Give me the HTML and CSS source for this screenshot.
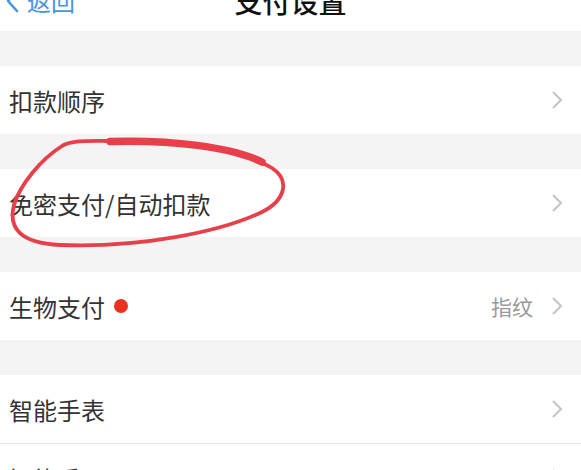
FILE: index.html
```html
<!DOCTYPE html>
<html lang="zh-CN">
<head>
    <meta charset="UTF-8">
    <meta name="viewport" content="width=device-width, initial-scale=1.0">
    <title>支付设置</title>
    <link rel="stylesheet" href="styles.css">
</head>
<body>
    <div class="page">
        <div class="nav">
            <div class="nav-inner">
                <a class="back" href="#">
                    <svg class="back-icon" width="14" height="24" viewBox="0 0 14 24">
                        <path d="M12 2 L3 12 L12 22" fill="none" stroke="#4a94dc" stroke-width="2.6" stroke-linecap="round" stroke-linejoin="round"/>
                    </svg>
                    <span>返回</span>
                </a>
                <h1 class="title">支付设置</h1>
                <div></div>
            </div>
        </div>

        <div class="gap"></div>
        <div class="cell">
            <span class="label">扣款顺序</span>
            <svg class="arrow" width="12" height="20" viewBox="0 0 12 20"><path d="M2 2 L10 10 L2 18" fill="none" stroke="#c4c4c8" stroke-width="2"/></svg>
        </div>

        <div class="gap"></div>
        <div class="cell">
            <span class="label">免密支付/自动扣款</span>
            <svg class="arrow" width="12" height="20" viewBox="0 0 12 20"><path d="M2 2 L10 10 L2 18" fill="none" stroke="#c4c4c8" stroke-width="2"/></svg>
        </div>

        <div class="gap"></div>
        <div class="cell">
            <span class="label">生物支付</span>
            <span class="dot"></span>
            <span class="value">指纹</span>
            <svg class="arrow" width="12" height="20" viewBox="0 0 12 20"><path d="M2 2 L10 10 L2 18" fill="none" stroke="#c4c4c8" stroke-width="2"/></svg>
        </div>

        <div class="gap"></div>
        <div class="cell cell-line">
            <span class="label">智能手表</span>
            <svg class="arrow" width="12" height="20" viewBox="0 0 12 20"><path d="M2 2 L10 10 L2 18" fill="none" stroke="#c4c4c8" stroke-width="2"/></svg>
        </div>
        <div class="cell">
            <span class="label">智能手环</span>
            <svg class="arrow" width="12" height="20" viewBox="0 0 12 20"><path d="M2 2 L10 10 L2 18" fill="none" stroke="#c4c4c8" stroke-width="2"/></svg>
        </div>

        <!-- hand drawn circle over the second row -->
        <svg class="mark" width="581" height="470" viewBox="0 0 581 470">
            <path d="M108 141 C170 138 240 148 272 168 C290 180 286 200 262 212 C220 232 140 248 60 245 C20 243 8 228 14 205 C20 185 40 160 62 146 C72 140 90 141 108 141 Z" fill="none" stroke="#e8404a" stroke-width="3.8" stroke-linejoin="round"/>
            <path d="M110 141.5 C170 139.5 232 147 262 162" fill="none" stroke="#e8404a" stroke-width="7.5" stroke-linecap="round"/>
        </svg>
    </div>
</body>
</html>
```

FILE: styles.css
```css
* {
    box-sizing: border-box;
    margin: 0;
    padding: 0;
}

body {
    font-family: "Noto Sans CJK SC", "Noto Sans", sans-serif;
    background-color: #f4f4f4;
    color: #333;
    overflow: hidden;
}

.page {
    position: relative;
    width: 581px;
    height: 470px;
    overflow: hidden;
}

.nav {
    height: 31px;
    background: white;
    overflow: hidden;
}

.nav-inner {
    display: grid;
    grid-template-columns: 1fr auto 1fr;
    align-items: center;
    height: 32px;
    margin-top: -17px;
}

.back {
    display: flex;
    align-items: center;
    gap: 8px;
    padding-left: 5px;
    color: #4a94dc;
    font-size: 24px;
    text-decoration: none;
}

.title {
    font-size: 28px;
    font-weight: 500;
    color: #111;
    line-height: 32px;
}

.gap {
    height: 35px;
}

.cell {
    display: flex;
    align-items: center;
    height: 68px;
    padding: 0 18px 0 9px;
    background: white;
}

.cell-line {
    height: 69px;
    border-bottom: 1px solid #e6e6e6;
    background-clip: padding-box;
}

.label {
    font-size: 24px;
    color: #333;
}

.dot {
    width: 14px;
    height: 14px;
    margin-left: 9px;
    border-radius: 50%;
    background: #e8311f;
}

.value {
    margin-left: auto;
    margin-right: 18px;
    font-size: 21px;
    color: #999;
}

.arrow {
    margin-left: auto;
}

.value + .arrow {
    margin-left: 0;
}

.mark {
    position: absolute;
    top: 0;
    left: 0;
    pointer-events: none;
}
```
